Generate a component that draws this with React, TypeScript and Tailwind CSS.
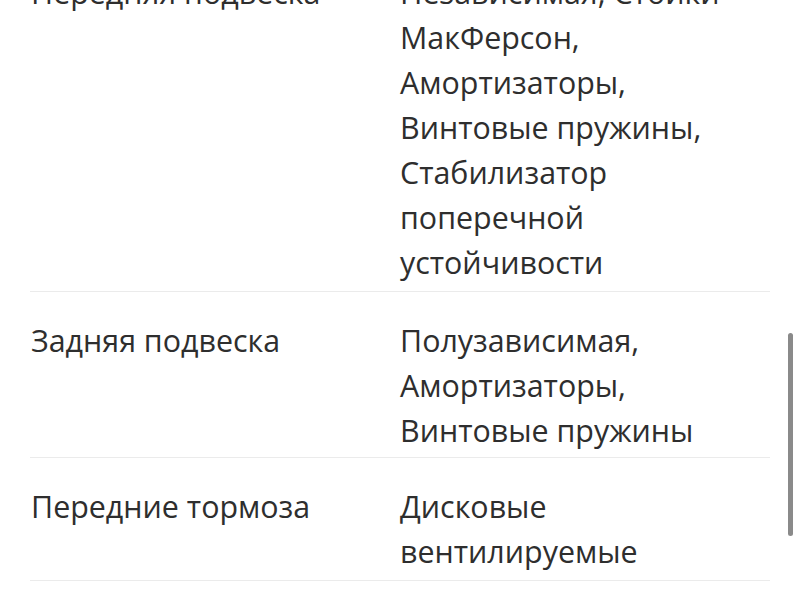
import React from "react";

const rows: { label: string; value: string[]; pb: string }[] = [
  {
    label: "Передняя подвеска",
    value: [
      "Независимая, Стойки",
      "МакФерсон,",
      "Амортизаторы,",
      "Винтовые пружины,",
      "Стабилизатор",
      "поперечной",
      "устойчивости",
    ],
    pb: "pb-[6px]",
  },
  {
    label: "Задняя подвеска",
    value: ["Полузависимая,", "Амортизаторы,", "Винтовые пружины"],
    pb: "pb-[4px]",
  },
  {
    label: "Передние тормоза",
    value: ["Дисковые", "вентилируемые"],
    pb: "pb-[6px]",
  },
];

export default function App() {
  return (
    <div
      className="relative w-[800px] h-[600px] overflow-hidden bg-white text-[#2e2e2e]"
      style={{ fontFamily: '"Open Sans", "Noto Sans", sans-serif' }}
    >
      <div className="mt-[-56px] ml-[30px] w-[740px]">
        {rows.map((r) => (
          <div
            key={r.label}
            className={
              "grid grid-cols-[370px_1fr] pt-[26px] border-b border-[#ebebeb] text-[30.4px] leading-[45px] " +
              r.pb
            }
          >
            <div className="pl-[1px]">{r.label}</div>
            <div>
              {r.value.map((v) => (
                <div key={v}>{v}</div>
              ))}
            </div>
          </div>
        ))}
      </div>
      <div className="absolute left-[788px] top-[333px] w-[5px] h-[203px] rounded-full bg-[#8a8a8a]" />
    </div>
  );
}
